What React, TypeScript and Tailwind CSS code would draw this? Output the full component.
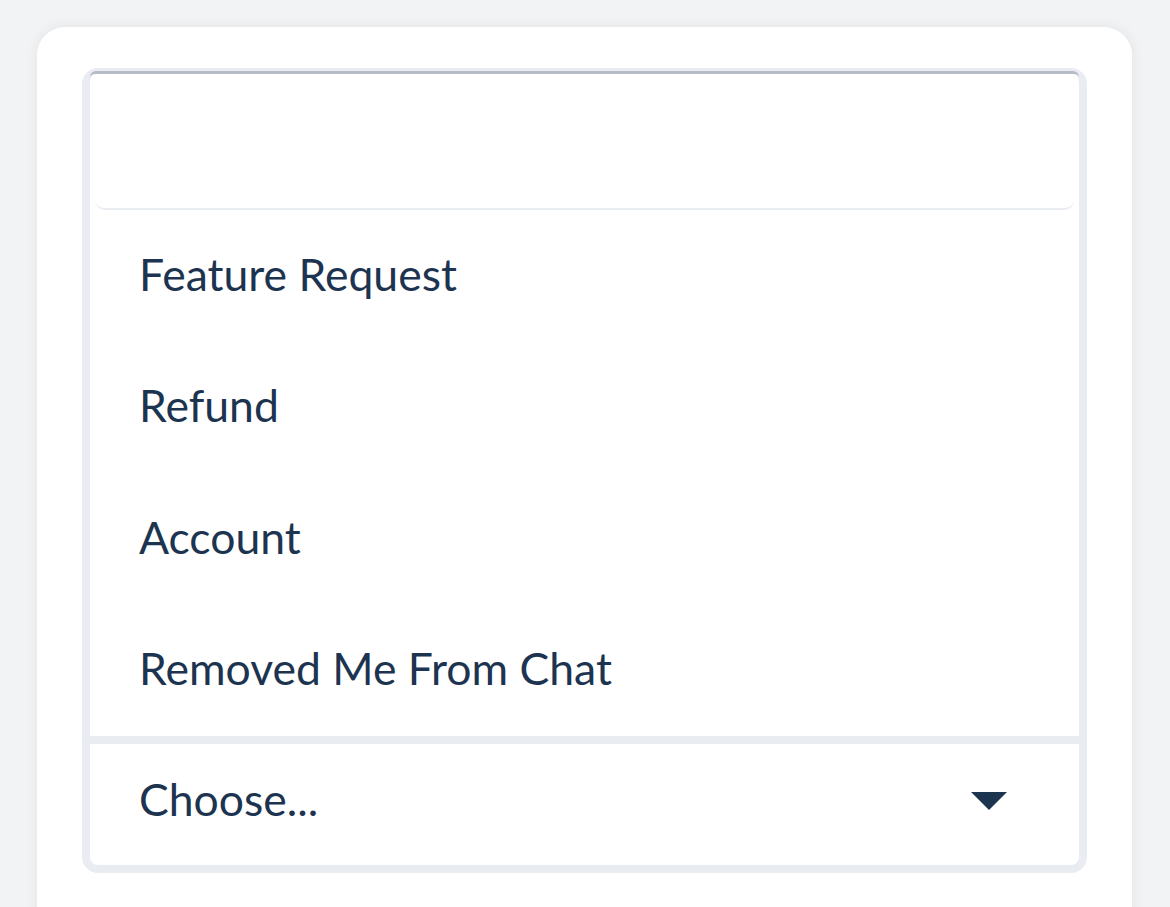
import React from "react";

const items = ["Feature Request", "Refund", "Account", "Removed Me From Chat"];

export default function App() {
  return (
    <div
      className="w-[1170px] h-[907px] overflow-hidden bg-[#f2f3f5] pt-[27px] pl-[37px] pr-[38px]"
      style={{ fontFamily: "Lato, 'Noto Sans', sans-serif" }}
    >
      <div className="h-[900px] bg-white rounded-t-[28px] shadow-[0_0_14px_rgba(0,0,0,0.07)] pt-[41px] px-[45px]">
        <div className="border-[8px] border-t-[3px] border-[#e9ecf1] rounded-[16px] bg-white">
          <div className="h-[139px] border-t-[3px] border-[#b4bdc7] rounded-t-[6px]">
            <div className="h-full mx-[5px] border-b-2 border-[#e9ecf1] rounded-b-[10px]" />
          </div>
          <div className="flex flex-col">
            {items.map((t) => (
              <div
                key={t}
                className="h-[131.5px] flex items-center pl-[49px] pb-[4px] text-[44.5px] text-[#1d3450] leading-none"
              >
                {t}
              </div>
            ))}
          </div>
          <div className="h-[8px] bg-[#e9ecf1]" />
          <div className="h-[121px] flex items-center justify-between pl-[49px] pr-[72px] pb-[10px] text-[44.5px] text-[#1d3450] leading-none">
            <span>Choose...</span>
            <svg width="36" height="18" viewBox="0 0 36 18" className="mt-[2px]">
              <polygon points="0,0 36,0 18,18" fill="#1d3450" />
            </svg>
          </div>
        </div>
      </div>
    </div>
  );
}
